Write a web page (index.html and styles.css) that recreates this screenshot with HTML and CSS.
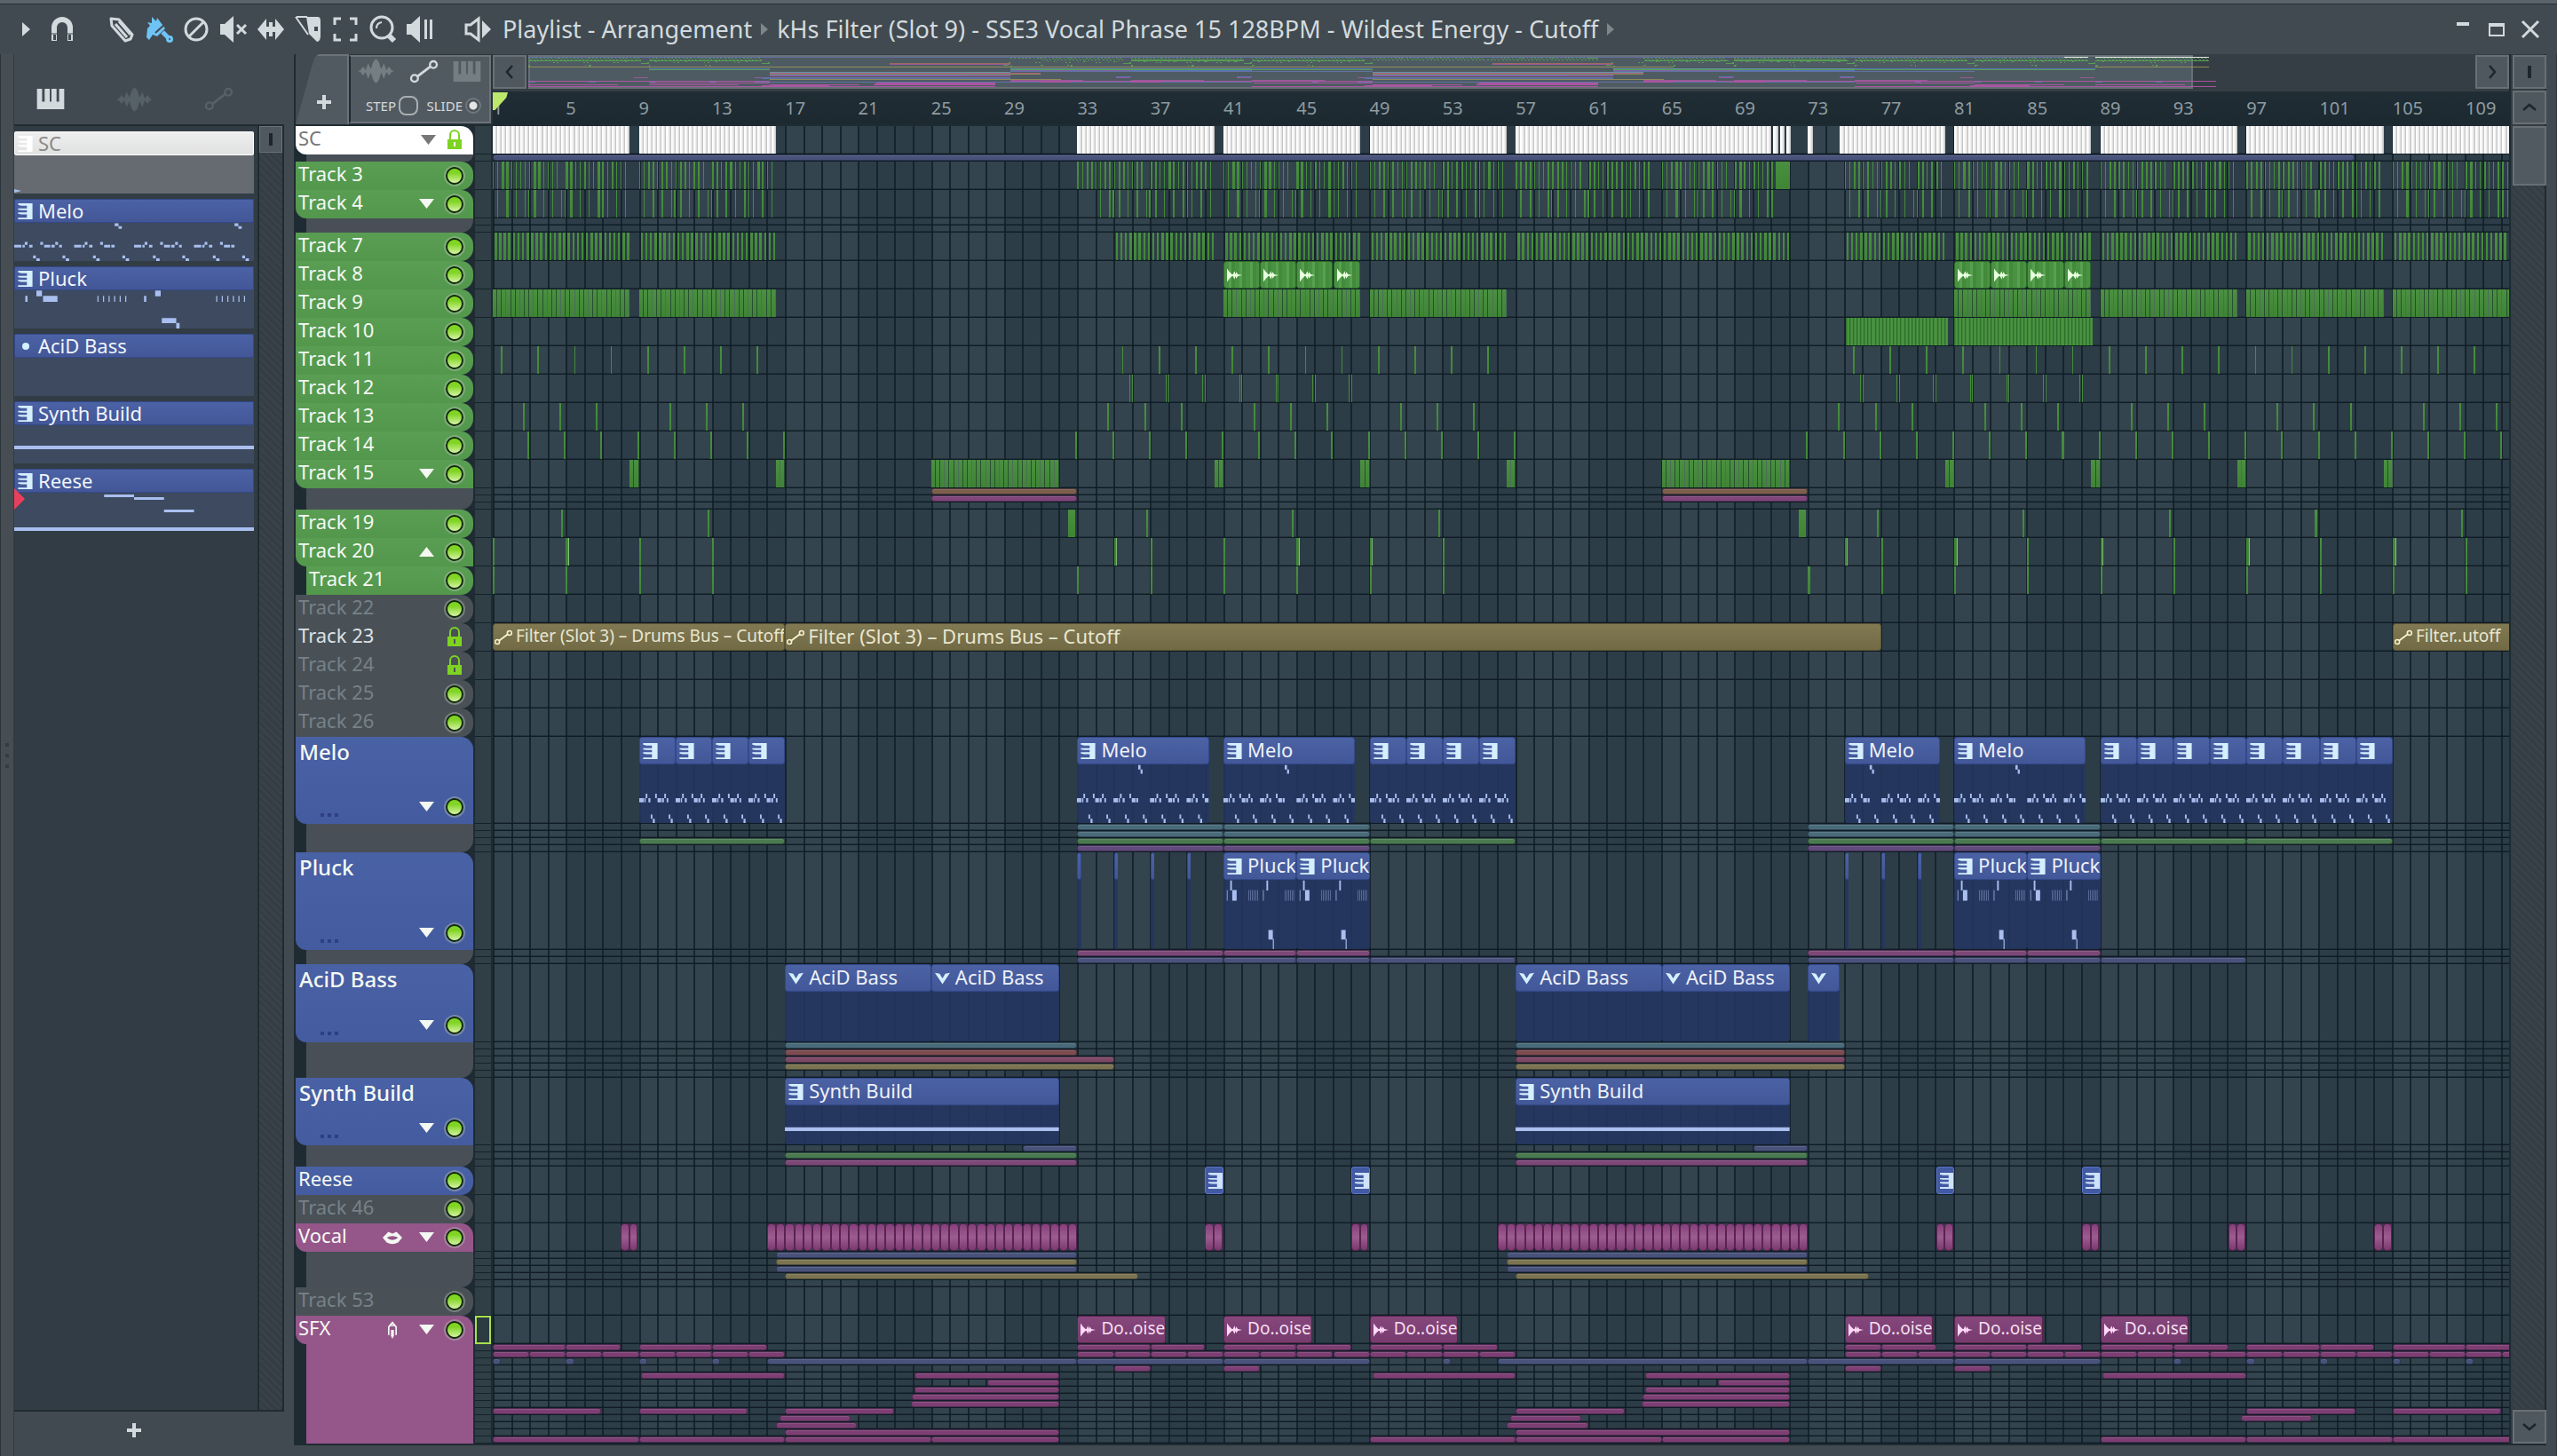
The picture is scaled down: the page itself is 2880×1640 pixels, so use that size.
FILE: index.html
```html
<!DOCTYPE html>
<html lang="en">
<head>
<meta charset="utf-8">
<title>Playlist - Arrangement</title>
<link rel="stylesheet" href="styles.css">
</head>
<body>
<svg class="defs" aria-hidden="true">
  <symbol id="piano" viewBox="0 0 32 24"><path fill="currentColor" d="M0 0h6v15h3V0h6v15h2V0h6v15h3V0h6v24H0z"/></symbol>
  <symbol id="keys" viewBox="0 0 18 20"><path fill="currentColor" d="M0 0h18v20H0v-2h11v-4H4l-4-1v-1.500h11V8.500H4L0 8V6.500h11V3H4L0 2z"/></symbol>
  <symbol id="wave" viewBox="0 0 42 28"><path fill="currentColor" d="M0 14l3-1 3-4 3 4 3-8 3 7 3-9 3-3 3 3 3 9 3-7 3 8 3-4 3 4 3 1-3 1-3 4-3-4-3 8-3-7-3 9-3 3-3-3-3-9-3 7-3-8-3 4-3-4z"/></symbol>
  <symbol id="auto" viewBox="0 0 32 28"><path fill="none" stroke="currentColor" stroke-width="3" d="M8 20L24 8"/><circle cx="5" cy="22" r="4" fill="none" stroke="currentColor" stroke-width="2.500"/><circle cx="27" cy="6" r="4" fill="none" stroke="currentColor" stroke-width="2.500"/></symbol>
  <symbol id="sample" viewBox="0 0 18 18"><path fill="currentColor" d="M0 1l3 4 3 3 1 0 2-4 1 4 1-3 2 3 5 1-5 1-2 3-1-3-1 4-2-4-1 0-3 3-3 4z"/></symbol>
  <symbol id="vee" viewBox="0 0 16 14"><path fill="currentColor" d="M0 1l5 1 3 5 3-5 5-1-8 12z"/></symbol>
  <symbol id="lock" viewBox="0 0 16 22"><path fill="none" stroke="currentColor" stroke-width="2" d="M3 12V6a5 5 0 0 1 10 0v6"/><path fill="currentColor" fill-rule="evenodd" d="M0 11h16v11H0zM7 14v5h2v-5z"/></symbol>
  <symbol id="lips" viewBox="0 0 24 18"><path fill="currentColor" fill-rule="evenodd" d="M0 9l7-7 5 2 5-2 7 7-5 6q-7 4-14 0zM5 9q7 6 14 0-7-4-14 0z"/></symbol>
  <symbol id="jet" viewBox="0 0 14 24"><path fill="none" stroke="currentColor" stroke-width="2" d="M2 19V8l5-6 5 6v11"/><path fill="currentColor" d="M4 5h6v2H4zM5 12h4v8l-2 4-2-4z"/></symbol>
  <symbol id="plus" viewBox="0 0 16 16"><path fill="currentColor" d="M6 0h4v6h6v4h-6v6H6v-6H0V6h6z"/></symbol>
  <symbol id="left" viewBox="0 0 18 18"><path fill="none" stroke="currentColor" stroke-width="2.500" d="M12 2L6 9l6 7"/></symbol>
</svg>

<div class="strip"></div>
<div class="window">
  <header class="titlebar">
    <button class="tool small" aria-label="Menu"><svg viewBox="0 0 10 16"><path fill="currentColor" d="M0 0l9 8-9 8z"/></svg></button>
    <button class="tool magnet" aria-label="Snap"><svg viewBox="0 0 30 30"><path fill="none" stroke="currentColor" stroke-width="6" d="M6 28V13a9 9 0 0 1 18 0v15"/><path stroke="#414a50" stroke-width="1" d="M2 20h8M20 20h8"/><path fill="#414a50" d="M5 21h3v6H5zM22 21h3v6h-3z"/></svg></button>
    <div class="tools">
      <button class="tool" aria-label="Draw"><svg viewBox="0 0 30 30"><path fill="none" stroke="currentColor" stroke-width="3" stroke-linejoin="round" d="M3 3l9 1 15 17-2 5-6 2L4 11zM8 9l13 15M12 6l13 15"/></svg></button>
      <button class="tool active" aria-label="Paint"><svg viewBox="0 0 30 30"><path fill="currentColor" d="M2 7l5 1V1l5 5 1-4 9 12-9 9-5-2-4 6-3-3 1-10 3-3z"/><path stroke="#414a50" stroke-width="2" d="M11 19L22 9"/><path stroke="currentColor" stroke-width="5" d="M19 18l8 8"/><circle cx="27" cy="26" r="4" fill="currentColor"/><circle cx="27" cy="26" r="1" fill="#414a50"/></svg></button>
      <button class="tool" aria-label="Delete"><svg viewBox="0 0 30 30"><circle cx="15" cy="15" r="12" fill="none" stroke="currentColor" stroke-width="3"/><path stroke="currentColor" stroke-width="3" d="M7 23L23 7"/></svg></button>
      <button class="tool" aria-label="Mute"><svg viewBox="0 0 30 30"><path fill="currentColor" d="M0 9h5L15 0v30L5 21H0z"/><path stroke="currentColor" stroke-width="3" d="M19 10l10 10M29 10L19 20"/></svg></button>
      <button class="tool" aria-label="Slip"><svg viewBox="0 0 30 30"><path fill="currentColor" d="M0 15L10 3v9h3V7h4v5h3V3l10 12-10 12v-9h-3v5h-4v-5h-3v9z"/></svg></button>
      <button class="tool" aria-label="Slice"><svg viewBox="0 0 30 30"><path fill="currentColor" fill-rule="evenodd" d="M13 1h13q3 0 3 5v16q0 7-4 7L16 20zM22 12v5h4v-5z"/><path stroke="currentColor" stroke-width="2" d="M1 1l14 20M2 1h12"/></svg></button>
      <button class="tool" aria-label="Select"><svg viewBox="0 0 30 30"><path fill="none" stroke="currentColor" stroke-width="3" d="M3 10V3h7M20 3h7v7M27 20v7h-7M10 27H3v-7"/></svg></button>
      <button class="tool" aria-label="Zoom"><svg viewBox="0 0 30 30"><circle cx="14" cy="13" r="12" fill="none" stroke="currentColor" stroke-width="3"/><path stroke="currentColor" stroke-width="6" d="M22 22l6 6"/><path fill="none" stroke="currentColor" stroke-width="2" d="M8 14q0-6 6-7"/></svg></button>
      <button class="tool" aria-label="Playback"><svg viewBox="0 0 30 30"><path fill="currentColor" d="M0 9h5L15 0v30L5 21H0zM20 4h3v22h-3zM26 4h3v22h-3z"/></svg></button>
    </div>
    <button class="tool speaker" aria-label="Preview"><svg viewBox="0 0 30 30"><path fill="none" stroke="currentColor" stroke-width="3" d="M7 10H2v10h5l9 7V3z"/><path fill="currentColor" d="M20 5l10 10-10 10z"/></svg></button>
    <nav class="crumbs"><a href="#">Playlist - Arrangement</a><i></i><a href="#">kHs Filter (Slot 9) - SSE3 Vocal Phrase 15 128BPM - Wildest Energy - Cutoff</a><i></i></nav>
    <div class="winbtns">
      <button class="tool" aria-label="Minimize"><svg viewBox="0 0 20 20"><path fill="currentColor" d="M3 2h14v4H3z"/></svg></button>
      <button class="tool" aria-label="Maximize"><svg viewBox="0 0 20 20"><path fill="currentColor" fill-rule="evenodd" d="M1 3h18v15H1zM3 7v9h14V7z"/></svg></button>
      <button class="tool" aria-label="Close"><svg viewBox="0 0 20 20"><path stroke="currentColor" stroke-width="3" d="M1 1l18 18M19 1L1 19"/></svg></button>
    </div>
  </header>

  <div class="main">
    <div class="edge-left"><i></i><i></i><i></i></div>
    <aside class="picker">
      <div class="picker-tabs">
        <button aria-label="Patterns"><svg class="i-piano on"><use href="#piano"/></svg></button>
        <button aria-label="Audio"><svg class="i-wave"><use href="#wave"/></svg></button>
        <button aria-label="Automation"><svg class="i-auto"><use href="#auto"/></svg></button>
      </div>
      <div class="picker-body">
        <ul class="patterns" id="patterns"></ul>
        <div class="scroll narrow"><button class="grip" aria-label="Scroll"><i></i></button><div class="hatch"></div></div>
      </div>
      <button class="add" aria-label="Add pattern"><svg><use href="#plus"/></svg></button>
    </aside>

    <section class="playlist">
      <div class="head">
        <button class="tab-add" aria-label="Add track"><svg><use href="#plus"/></svg></button>
        <div class="modes">
          <div class="mode-icons">
            <svg class="i-wave dim"><use href="#wave"/></svg>
            <svg class="i-auto on"><use href="#auto"/></svg>
            <svg class="i-piano dim"><use href="#piano"/></svg>
          </div>
          <div class="mode-opts">
            <label>STEP<input type="checkbox" class="step"></label>
            <label>SLIDE<input type="radio" class="slide" checked></label>
          </div>
        </div>
        <div class="timeline">
          <div class="overview-row">
            <button class="sq" aria-label="Scroll left"><svg><use href="#left"/></svg></button>
            <div class="overview" id="overview"></div>
            <button class="sq" aria-label="Scroll right"><svg class="flip"><use href="#left"/></svg></button>
          </div>
          <div class="ruler" id="ruler"></div>
        </div>
      </div>
      <div class="tracks" id="tracks"><div class="barlines" id="barlines"></div></div>
    </section>

    <div class="vscroll">
      <button class="sq" aria-label="Zoom"><i></i></button>
      <button class="sq" aria-label="Scroll up"><svg class="up"><use href="#left"/></svg></button>
      <button class="thumb" aria-label="Scroll thumb"></button>
      <div class="hatch"></div>
      <button class="sq" aria-label="Scroll down"><svg class="down"><use href="#left"/></svg></button>
    </div>
    <div class="edge-right"></div>
  </div>
</div>
<script src="script.js"></script>
</body>
</html>
```
FILE: styles.css
```css
:root {
  --panel: #414a50;
  --line: #1f2b32;
  --icon: #d3dade;
}
* { box-sizing: border-box; }
body {
  margin: 0;
  min-height: 100vh;
  display: flex;
  flex-direction: column;
  background: var(--panel);
  color: var(--icon);
  font-family: "Noto Sans", "Open Sans", sans-serif;
  font-size: 22px;
  line-height: 28px;
}
button { padding: 0; border: 0; background: none; color: inherit; font: inherit; display: grid; place-items: center; }
svg { display: block; overflow: visible; }
.defs { position: absolute; width: 0; height: 0; }
.strip { height: 5px; background: #5a626a; border-bottom: 1px solid #262e35; }
.window { flex: 1; display: flex; flex-direction: column; border-bottom: 2px solid #2c353b; }

.titlebar { height: 56px; display: flex; align-items: center; padding: 0 20px 0 25px; }
.tool { width: 30px; height: 30px; }
.tool svg { width: 100%; height: 100%; }
.tool.small { width: 10px; height: 16px; }
.tool.magnet { margin-left: 20px; }
.tools { display: flex; gap: 12px; margin-left: 37px; }
.active { color: #6fc4f6; }
.speaker { margin: 0 13px 0 35px; }
.crumbs { display: flex; align-items: center; font-size: 27px; white-space: nowrap; flex: 1; }
.crumbs a { color: inherit; text-decoration: none; }
.crumbs i { margin: 0 10px; border: 7px solid transparent; border-left: 8px solid #7d868b; border-right: 0; }
.winbtns { display: flex; gap: 18px; }
.winbtns .tool { width: 20px; height: 20px; }

.main { flex: 1; display: grid; grid-template-columns: 16px 304px 11px minmax(0, 1fr) 42px 12px; grid-template-rows: auto; }
.edge-left { border-left: 1px solid #2b343a; border-right: 1px solid #333c42; background: #464d53; display: flex; flex-direction: column; justify-content: center; align-items: center; gap: 8px; }
.edge-left i { width: 4px; height: 4px; background: #343c42; }
.edge-right { border-right: 1px solid #2b343a; grid-column: 6; }

.picker { display: flex; flex-direction: column; }
.picker-tabs { height: 79px; display: flex; align-items: center; padding: 22px 0 0 25px; gap: 58px; color: #566067; }
.picker-tabs button { height: 28px; }
.i-piano { width: 32px; height: 23px; }
.i-wave { width: 41px; height: 28px; }
.i-auto { width: 33px; height: 27px; }
.on { color: var(--icon); }
.dim { color: #757e83; }
.picker-body { flex: 1; display: flex; border-top: 2px solid var(--line); border-bottom: 2px solid var(--line); background: #323c44; }
.patterns { flex: 1; list-style: none; margin: 0; padding: 6px 4px 0 0; display: flex; flex-direction: column; gap: 6px; }
.pattern { position: relative; height: 70px; background: #3d4a5f; display: flex; flex-direction: column; }
.pattern-head { height: 27px; background: linear-gradient(#4b62a4, #435798); border: 1px solid #33498a; border-radius: 2px; display: flex; align-items: center; gap: 6px; padding-left: 3px; color: #f0f4fa; }
.pattern-head span { padding-bottom: 2px; }
.pattern-head svg { width: 17px; height: 18px; color: #d6efff; }
.pattern-head .dot { width: 8px; height: 8px; margin: 0 4px 0 5px; border-radius: 50%; background: #d6efff; }
.pattern.blank { background: #656b71; }
.blank .pattern-head { background: linear-gradient(#eee, #e0e1e1); border-color: #fff; color: #8a8a8a; }
.blank .pattern-head svg { color: #fff; }
.pattern .notes { width: 100%; height: 43px; }
.marker { position: absolute; left: 0; top: 22px; border: 12px solid transparent; border-left-color: #e8405c; border-right: 0; }
.notes { fill: #a9bff0; }
.scroll.narrow { width: 30px; border-left: 2px solid var(--line); border-right: 2px solid var(--line); display: flex; flex-direction: column; }
.grip { height: 30px; background: #50585f; border: 1px solid #6a7278; }
.grip i, .sq i { width: 4px; height: 14px; background: #1c262c; }
.hatch { flex: 1; background: repeating-linear-gradient(45deg, #343d44 0 3px, #3a4249 3px 6px); }
.add { height: 50px; margin-right: 34px; padding-bottom: 8px; }
.add svg, .tab-add svg { width: 16px; height: 16px; }

.playlist { grid-column: 4; display: flex; flex-direction: column; min-width: 0; margin-bottom: 12px; border-left: 2px solid var(--line); border-bottom: 2px solid var(--line); }
.head { height: 81px; display: flex; border-bottom: 2px solid var(--line); background: linear-gradient(90deg, #414a50 30px, #2a343b 30px); }
.tab-add { width: 60px; background: #525a61; clip-path: polygon(0 100%, 30% 18%, 36% 4%, 44% 0, 100% 0, 100% 100%); border-top: 2px solid #6b7379; border-right: 2px solid #6b7379; padding: 26px 0 0 6px; }
.modes { width: 160px; margin: 1px 2px 1px 0; background: #525a61; border: 2px solid #6b7379; border-left: 2px solid #20292f; display: flex; flex-direction: column; justify-content: space-between; padding: 2px 9px 6px 8px; }
.mode-icons { display: flex; justify-content: space-between; align-items: center; }
.mode-opts { display: flex; justify-content: space-between; padding-left: 9px; font-size: 15px; line-height: 24px; }
.mode-opts label { display: flex; align-items: center; gap: 3px; }
.mode-opts input { appearance: none; margin: 0; }
.step { width: 22px; height: 22px; border: 2px solid #a8afb3; border-radius: 8px; }
.slide { width: 18px; height: 18px; border: 2px solid #6f777c; border-radius: 50%; background: radial-gradient(circle, #e2e6e8 4px, #4b5359 5px); }
.timeline { flex: 1; min-width: 0; display: flex; flex-direction: column; }
.overview-row { height: 42px; display: flex; background: #363e45; }
.sq { width: 38px; height: 38px; margin-top: 1px; background: #50585f; border: 2px solid #687076; color: #1c262c; flex: none; }
.sq svg { width: 18px; height: 18px; }
.sq .flip { transform: rotate(180deg); }
.sq .up { transform: rotate(90deg); }
.sq .down { transform: rotate(270deg); }
.overview { flex: 1; position: relative; margin: 1px 0 3px 2px; }
.overview svg { width: 100%; height: 38px; position: relative; overflow: hidden; opacity: .85; }
.view { position: absolute; inset: 0 auto 0 0; width: 85.5%; background: #4e5b62; border: 2px solid #687076; }
.ruler { flex: 1; display: flex; align-items: center; overflow: hidden; background: linear-gradient(#202d35, #1c2930); color: #8f9ba1; font-size: 20px; line-height: 24px; position: relative; }
.ruler span { flex: none; }
.ruler::before { content: ""; position: absolute; left: 0; top: 1px; width: 17px; height: 20px; background: #bce86c; clip-path: polygon(0 0, 100% 0, 90% 30%, 15% 100%, 0 100%); }

.tracks { position: relative; background: #1f2b33; }
.barlines { position: absolute; inset: 0 0 0 222px; display: flex; overflow: hidden; }
.barlines i { flex: none; background: #34444e; border-left: 2px solid #15242d; }
.barlines i.dark { background: #2d3d47; }
.group { position: relative; display: flex; }
.names { width: 200px; flex: none; display: flex; flex-direction: column; }
.name { position: relative; display: flex; justify-content: space-between; border-radius: 0 14px 14px 0; padding: 0 11px 0 3px; color: #f4f8f2; }
.name.open { border-radius: 0 14px 0 12px; }
.name.child { margin-left: 12px; }
.name .label { line-height: 27px; }
.name .ctl { display: flex; align-items: flex-end; gap: 13px; padding-bottom: 6px; }
.name .ctl .caret { margin-bottom: 5px; }
.name.tall { padding-left: 4px; }
.name.tall .label { font-size: 24px; font-weight: 500; line-height: 33px; }
.name.tall .ctl { padding-bottom: 9px; }
.dots { position: absolute; left: 28px; bottom: 8px; width: 20px; height: 4px; background: repeating-linear-gradient(90deg, #2c4082 0 4px, transparent 4px 8px); }
.green { background: linear-gradient(#599e53, #52974b); }
.blue { background: linear-gradient(#4961a5, #445b9f); }
.pink { background: #95568a; }
.grey { background: #495157; color: #dde1e3; }
.grey.off { color: #788187; }
.name.white { background: #fff; color: #777; }
.led { appearance: none; margin: 0; width: 20px; height: 20px; border-radius: 50%; border: 2px solid #10290a; outline: 2px solid rgba(190, 200, 185, .4); background: linear-gradient(#80d423 30%, #d6f3a4); }
.caret { width: 17px; height: 11px; background: currentColor; clip-path: polygon(0 0, 100% 0, 50% 100%); }
.caret.rev { clip-path: polygon(0 100%, 50% 0, 100% 100%); }
.lockbtn { color: #7ed321; margin-right: 2px; }
.lockbtn svg { width: 16px; height: 22px; }
.glyph { width: 22px; height: 20px; margin-right: 6px; }
.subbox { margin-left: 12px; border-radius: 0 0 14px 0; background: #484f56; }
.subbox.pink { border-radius: 0; background: #95568a; }
.gutter { width: 18px; margin: 0 2px; flex: none; }
.gutter i { display: block; background: #303e46; border-bottom: 1px solid #14222b; }
.gutter i.sel { background: #2c3a42; border: 2px solid #a8e04a; }
.lanes { flex: 1; min-width: 0; overflow: hidden; }
.lane { position: relative; border-bottom: 1px solid #0f1c25; box-shadow: inset 0 -1px rgba(15, 28, 37, .45); }
.lane > * { position: absolute; top: 0; bottom: 0; }
.hit { background: linear-gradient(#4a8f41, #3f8535); }
.hit.bright { background: linear-gradient(90deg, #3f8535 60%, #a5d59a); }
.q9 { background: linear-gradient(#4b9042, #3f8436); border-right: 1px solid #27502f; }
.q9:nth-child(3n) { border-right-color: #4b6e58; }
.q10 { background: linear-gradient(90deg, #2f702b 1px, #4f9947 2px, #438a3a); }
.qw { background: linear-gradient(90deg, #fff 20%, #ececec 60%, #b9b9b9); }
.clip { overflow: hidden; border-radius: 3px; white-space: nowrap; display: flex; flex-direction: column; }
.clip-head { flex: none; height: 31px; display: flex; align-items: center; gap: 6px; padding-left: 3px; border: 1px solid #33498a; border-radius: 3px; background: linear-gradient(#4b62a4, #425798); color: #eef1f8; line-height: 24px; overflow: hidden; }
.clip-head span { padding-bottom: 3px; }
.clip-head svg { width: 17px; height: 18px; color: #d6efff; flex: none; }
.clip.midi { background: rgba(36, 54, 98, .86); }
.clip.midi .notes { flex: 1; width: 100%; min-height: 0; }
.clip.sample .clip-head, .clip.auto .clip-head { flex: 1; }
.clip.sample .clip-head { border-color: #2b6a27; background: repeating-linear-gradient(90deg, #4a9243 0 5px, #57a04f 5px 8px, #438a3b 8px 12px); }
.clip.sample svg { color: #e6ffdc; }
.clip.noise .clip-head { flex: 1; border-color: #5b2250; background: linear-gradient(#85477c, #773b6e); color: #f5dff0; font-size: 19px; }
.clip.noise svg { color: #ffd8f8; }
.clip.auto .clip-head { border-color: #5a5434; background: linear-gradient(#807952, #716a45); color: #e9e6d0; padding-left: 1px; gap: 4px; }
.clip.auto svg { width: 20px; color: #f6f4cf; }
.clip.tight .clip-head { font-size: 19px; }
.clip.mini { background: #4259a3; border: 1px solid #5c76c4; padding: 5px 0 0 3px; }
.clip.mini svg { width: 16px; height: 20px; color: #cfe2fa; }
.vox { border-radius: 4px; border: 1px solid #5b2250; background: linear-gradient(#84407a, #9c5c90 50%, #7a3a70); }
.bar { border-radius: 3px; border: 1px solid rgba(10, 15, 30, .4); box-shadow: inset 0 1px rgba(255, 255, 255, .12); }
.b-slate { background: #49527a; }
.b-brown { background: #7d5d4c; }
.b-purple { background: #80457b; }
.b-teal { background: #496a79; }
.b-green { background: #4a7a4f; }
.b-violet { background: #634a7c; }
.b-rose { background: #7d4878; }
.b-red { background: #7c4c50; }
.b-wine { background: #7d4866; }
.b-olive { background: #7b7450; }
.b-mag { background: #7d3f73; }

.vscroll { padding-left: 2px; border-left: 2px solid var(--line); border-right: 2px solid var(--line); display: flex; flex-direction: column; margin-bottom: 12px; border-bottom: 2px solid var(--line); background: #343d44; grid-column: 5; }
.vscroll .sq + .sq { margin-top: 2px; }
.thumb { width: 38px; height: 67px; margin-top: 2px; background: #525a61; border: 2px solid #687076; }
```
FILE: script.js
```js
// Bars visible in the lane area and in the overview strip.
const SPAN = 110.37, MAP = 129.2;
const pct = n => (n / SPAN * 100).toFixed(4) + '%';
const place = (s, e) => `left:${pct(s - 1)};width:${pct(e - s)}`;
const icon = id => `<svg><use href="#${id}"/></svg>`;
const range = (from, to, step) => { const r = []; for (let v = from; v <= to + 0.001; v += step) r.push(v); return r; };
const shown = (list, to) => list.filter(v => v < to);

// Note shapes. One bar is 54 units wide.
function rects(list) { return list.map(([x, y, w, h]) => `M${x} ${y}h${w}v${h}h${-w}z`).join(''); }
function melo(offset, len) {
  const out = [];
  for (let c = 0; c * 2 < offset + len; c++) {
    const x = (c * 2 - offset) * 54, turn = c % 2 === 1 && len > 2;
    out.push([x, 113, 13, 14], [x + 15, 113, 4, 14], [x + 19, 98, 5, 15], [x + 27, 113, 6, 14], [x + 47, 98, 5, 15], [x + 54, 113, 11, 14], [x + 67, 113, 6, 14]);
    if (turn) out.push([x + 73, 2, 7, 15], [x + 80, 17, 6, 14]);
    else out.push([x + 74, 98, 5, 15], [x + 81, 113, 5, 14]);
    out.push([x + 34, 168, 5, 14], [x + 40, 182, 6, 14], [x + 87, 168, 5, 14], [x + 93, 182, 6, 14]);
  }
  return notes(len * 54, 196, rects(out.filter(r => r[0] >= 0)));
}
function pluck(len) {
  const out = [[10, 34, 2, 36], [20, 2, 5, 34], [26, 34, 13, 36], [117, 34, 2, 36], [127, 2, 5, 34], [133, 168, 13, 32], [146, 198, 3, 34]];
  for (let i = 0; i < 6; i++) out.push([75 + i * 5, 34, 1, 36], [182 + i * 5, 34, 1, 36]);
  return notes(len * 54, 232, rects(out));
}
function notes(w, h, d) { return `<svg class="notes" viewBox="0 0 ${w} ${h}" preserveAspectRatio="none"><path d="${d}"/></svg>`; }

// ---- Pattern picker
const line = notes(100, 43, rects([[0, 23, 100, 4]]));
const reese = notes(100, 43, rects([[37.5, 2, 12.5, 3], [50, 5, 12.5, 3], [62.5, 19, 12.5, 3], [0, 39, 100, 4]]));
document.getElementById('patterns').innerHTML = [
  ['SC', notes(100, 43, 'M0 38l3 2-3 2z'), 'blank'], ['Melo', melo(0, 8)], ['Pluck', pluck(4)], ['AciD Bass', '', 'plain'], ['Synth Build', line], ['Reese', reese]
].map(([n, body, cls = '']) => `<li class="pattern ${cls}"><div class="pattern-head">${cls === 'plain' ? '<i class="dot"></i>' : icon('keys')}<span>${n}</span></div>${body}${n === 'Reese' ? '<i class="marker"></i>' : ''}</li>`).join('');

// ---- Clip builders: each returns {s, e, html}
const el = (s, e, cls, inner = '') => ({ s, e, cls, html: `<i class="${cls}" style="${place(s, e)}">${inner}</i>` });
const bars = (c, ...pairs) => pairs.map(([s, e]) => el(s, e, 'bar b-' + c));
const hits = (list, w = 0.1, cls = 'hit') => shown(list, 111.4).map(s => el(s, s + w, cls));
const cells = (s, e, w, cls) => range(s, e - w, w).map(v => el(v, v + w, cls));
const clip = (s, e, kind, ic, label, body = '') => ({ s, e, cls: kind, html: `<div class="clip ${kind}" style="${place(s, e)}"><div class="clip-head">${icon(ic)}${label ? `<span>${label}</span>` : ''}</div>${body}</div>` });
const steps = (list, w) => list.map(s => [s, s + w]);

const main = [[1, 8.5], [9, 16.5], [33, 40.5], [41, 48.5], [49, 56.5], [57, 64.5], [65, 71.25], [75, 80.5], [81, 88.5], [89, 96.5], [97, 104.5], [105, 112.5]];
const white = [[1, 8.5], [9, 16.5], [33, 40.5], [41, 48.5], [49, 56.5], [57, 71], [71.1, 71.35], [71.45, 71.7], [71.8, 72.05], [73, 73.25], [74.75, 80.5], [81, 88.5], [89, 96.5], [97, 104.5], [105, 112.5]];
const wide = [2, 3, 9, 10, 16, 17, 20, 23, 26];
const t3 = main.flatMap(([s, e]) => range(0, 29, 1).filter(q => q !== 15 && s + q / 4 < e).map(q => el(s + q / 4, s + q / 4 + (wide.includes(q) ? 0.11 : 0.06), 'hit')));
const t4q = [1, 3, 5, 7, 7.75, 9, 11, 13, 15, 15.75, 17, 19, 21, 23, 24, 25, 27, 29];
const t4 = main.flatMap(([s, e]) => t4q.filter(q => !(s === 33 && q < 5) && s + q / 4 < e).map(q => el(s + q / 4, s + q / 4 + ([3, 9, 17, 23].includes(q) ? 0.11 : 0.06), 'hit')));
const t7 = [[1, 8.5], [9, 16.5], [35, 40.5], [41, 48.5], [49, 56.5], [57, 72], [75, 80.5], [81, 88.5], [89, 96.5], [97, 104.5], [105, 112.5]]
  .flatMap(([s, e]) => range(s + 0.1, e - 0.1, 0.25).map(v => el(v, v + 0.12, 'hit')));
const t9 = [[1, 8.5], [9, 16.5], [41, 48.5], [49, 56.5], [81, 88.5], [89, 96.5], [97, 104.5], [105, 112.5]].flatMap(([s, e]) => cells(s, e, 0.25, 'q9'));
const even = (a, b, off, skip) => range(a, b, 2).filter(v => !skip || v % 8 !== 0).map(v => v + off);
const fill = [8.5, 16.5, 40.5, 48.5, 56.5, 80.5, 88.5, 96.5, 104.5].flatMap(s => cells(s, s + 0.5, 0.25, 'q9'));

const M = (s, e, off = 0) => clip(s, e, 'midi', 'keys', e - s > 2 ? 'Melo' : '', melo(off, e - s));
const P = s => clip(s, s + 4, 'midi', 'keys', 'Pluck', pluck(4));
const thin = s => ({ s, e: s + 0.2, cls: 'midi', html: `<div class="clip midi" style="${place(s, s + 0.2)}"><div class="clip-head"></div></div>` });
const A = (s, e) => clip(s, e, 'midi', 'vee', e - s > 2 ? 'AciD Bass' : '');
const S = s => clip(s, s + 15, 'midi', 'keys', 'Synth Build', notes(100, 64, rects([[0, 36, 100, 6]])));
const R = s => ({ s, e: s + 1, cls: 'midi', html: `<div class="clip mini" style="${place(s, s + 1)}">${icon('keys')}</div>` });
const vox = [...[8, 40, 48, 80, 88, 96, 104].flatMap(s => cells(s, s + 0.94, 0.47, 'vox')), ...cells(16, 33, 0.5, 'vox'), ...cells(56, 73, 0.5, 'vox')];
const noise = s => clip(s, s + 4.85, 'noise', 'sample', 'Do..oise');
const pair = (s, m, e) => [[s, m], [m, e]];
const late = [77, 81, 85, 89, 93, 97, 101, 105, 109];

const T = (name, color, clips = [], more = {}) => ({ name, color, h: 32, clips, subs: [], ...more });
const tracks = [
  T('SC', 'white', white.flatMap(([s, e]) => cells(s, e, 0.25, 'qw')), { lock: 1, caret: 1, subs: [bars('slate', [1, 102.9])] }),
  T('Track 3', 'green', [...t3, el(71.25, 72, 'hit')]),
  T('Track 4', 'green', t4, { caret: 1, subs: [[], []] }),
  T('Track 7', 'green', t7),
  T('Track 8', 'green', [41, 43, 45, 47, 81, 83, 85, 87].map(s => clip(s, s % 8 === 7 ? s + 1.5 : s + 2, 'sample', 'sample', ''))),
  T('Track 9', 'green', t9),
  T('Track 10', 'green', [...cells(75.05, 80.65, 0.2, 'q10'), ...cells(81, 88.6, 0.2, 'q10')]),
  T('Track 11', 'green', hits([...even(1, 15, 0.45), ...even(35, 55, 0.45), ...even(75, 109, 0.45)], 0.08)),
  T('Track 12', 'green', hits([...even(35, 47, 0.85), ...even(35, 47, 0.98), ...even(75, 87, 0.85), ...even(75, 87, 0.98)], 0.05)),
  T('Track 13', 'green', hits([...even(2, 14, 0.65, 1), ...even(34, 54, 0.65, 1), ...even(74, 110, 0.65, 1)])),
  T('Track 14', 'green', hits([...even(2, 16, 0.9), ...even(32, 56, 0.9), ...even(72, 110, 0.9)])),
  T('Track 15', 'green', [...fill, ...cells(25, 32, 0.25, 'q9'), ...cells(65, 72, 0.25, 'q9')], { caret: 1, subs: [bars('brown', [25, 33], [65, 73]), bars('purple', [25, 33], [65, 73]), []] }),
  T('Track 19', 'green', [...hits([4.75, 12.75, 36.75, 44.75, 52.75, 76.75, 84.75, 92.75, 100.75, 108.75]), ...hits([32.5, 72.5], 0.4)]),
  T('Track 20', 'green', [...hits([1, 9, 13, 37, 41, 53, ...late.filter(v => v % 8 === 5)]), ...hits([5, 35, 45, 49, 75, ...late.filter(v => v % 8 === 1)], 0.18, 'hit bright')], { caret: 2 }),
  T('Track 21', 'green', hits([1, 5, 9, 13, 33, 37, 41, 45, 49, 53, 73, ...late]), { child: 1 }),
  T('Track 22', 'grey off'),
  T('Track 23', 'grey', [clip(1, 17, 'auto tight', 'auto', 'Filter (Slot 3) – Drums Bus – Cutoff'), clip(17, 77, 'auto', 'auto', 'Filter (Slot 3) – Drums Bus – Cutoff'), clip(105, 112.5, 'auto tight', 'auto', 'Filter..utoff')], { lock: 1 }),
  T('Track 24', 'grey off', [], { lock: 1 }),
  T('Track 25', 'grey off'),
  T('Track 26', 'grey off'),
  T('Melo', 'blue', [...[9, 11, 13, 15, 49, 51, 53, 55, 89, 91, 93, 95, 97, 99, 101, 103].map(s => M(s, s + 2)), M(33, 40.2), M(41, 48.2), M(75, 80.2, 2), M(81, 88.2)], {
    h: 98, caret: 1, subs: [
      bars('teal', [33, 41], [41, 49], [73, 81], [81, 89]),
      bars('teal', [33, 41], [41, 49], [73, 81], [81, 89]),
      bars('green', [9, 17], [33, 41], [41, 49], [49, 57], [73, 81], [81, 89], [89, 97], [97, 105]),
      bars('violet', [33, 41], [41, 49], [73, 81], [81, 89])]
  }),
  T('Pluck', 'blue', [...[33, 35, 37, 39, 75, 77, 79].map(thin), ...[41, 45, 81, 85].map(P)], {
    h: 110, caret: 1, subs: [
      bars('rose', [33, 41], [41, 45], [45, 49], [73, 81], [81, 85], [85, 89]),
      bars('slate', [33, 41], [41, 45], [45, 49], [49, 57], [73, 81], [81, 85], [85, 89], [89, 97])]
  }),
  T('AciD Bass', 'blue', [A(17, 25), A(25, 32), A(57, 65), A(65, 72), A(73, 74.73)], {
    h: 88, caret: 1, subs: [bars('teal', [17, 33], [57, 75]), bars('red', [17, 33], [57, 75]), bars('wine', [17, 35], [57, 75]), bars('olive', [17, 35], [57, 75]), []]
  }),
  T('Synth Build', 'blue', [S(17), S(57)], { h: 76, caret: 1, subs: [bars('slate', [30, 33], [70, 73]), bars('green', [17, 33], [57, 73]), bars('rose', [17, 33], [57, 73])] }),
  T('Reese', 'blue', [40, 48, 80, 88].map(R)),
  T('Track 46', 'grey off'),
  T('Vocal', 'pink', vox, { glyph: 'lips', caret: 1, subs: [bars('slate', [16.5, 33], [56.5, 73]), bars('olive', [16.5, 33], [56.5, 73]), bars('slate', [16.5, 33], [56.5, 73]), bars('olive', [17, 36.35], [57, 76.35]), []] }),
  T('Track 53', 'grey off'),
  T('SFX', 'pink', [33, 41, 49, 75, 81, 89].map(noise), {
    glyph: 'jet', caret: 1, sel: 1, subs: [
      bars('mag', ...[1, 9, 33, 41, 49, 81, 89, 97, 105].flatMap(s => pair(s, s + 4, s + 7)), ...pair(75, 77, 80)),
      bars('mag', ...steps([...range(1, 15, 2), ...range(33, 55, 2), ...range(75, 111, 2)], 2)),
      bars('slate', ...steps([1, 5, 9, 13, 53, 93, 97, 101, 105, 109], 0.45), [16, 33], [33, 41], [41, 49], [56, 73], [73, 81], [81, 89]),
      bars('mag', [35, 37], [41, 43], [75, 77], [81, 83]),
      bars('mag', [9.1, 17], [24.1, 32], [49.15, 57], [64.1, 72], [89.1, 97]),
      bars('mag', [28.05, 32], [68.05, 72]),
      bars('mag', [24.1, 32], [64.1, 72]),
      bars('mag', [23.95, 32], [63.95, 72]),
      bars('mag', [23.9, 32], [63.9, 72]),
      bars('mag', ...steps([1, 9, 17, 57, 97, 105], 5.95)),
      bars('mag', [16.7, 20.6], [56.7, 60.6], [96.7, 100.6]),
      bars('mag', [16.5, 20.95], [56.5, 60.95]),
      bars('mag', [17, 32], [57, 72]),
      bars('mag', [1, 9], [9, 17], [17, 25], [25, 32], [49, 57], [57, 65], [65, 72], [89, 97], [97, 105], [105, 113])]
  })
];

// ---- Track list
const lane = (list, h) => `<div class="lane" style="height:${h}px">${list.map(c => c.html).join('')}</div>`;
document.getElementById('tracks').insertAdjacentHTML('beforeend', tracks.map(t => {
  const open = t.subs.length || t.caret;
  const cls = ['name', t.color, open ? 'open' : '', t.h > 32 ? 'tall' : '', t.child ? 'child' : ''].join(' ');
  const ctl = (t.glyph ? `<svg class="glyph"><use href="#${t.glyph}"/></svg>` : '')
    + (t.caret ? `<button class="caret ${t.caret === 2 ? 'rev' : ''}" aria-label="Toggle group ${t.name}"></button>` : '')
    + (t.lock ? `<button class="lockbtn" aria-label="Lock ${t.name}">${icon('lock')}</button>` : `<input type="checkbox" class="led" checked aria-label="Enable ${t.name}">`);
  return `<div class="group"><div class="names"><div class="${cls}" style="height:${t.h}px"><span class="label">${t.name}</span>${t.h > 32 ? '<i class="dots"></i>' : ''}<div class="ctl">${ctl}</div></div>`
    + (t.subs.length ? `<div class="subbox ${t.name === 'SFX' ? 'pink' : ''}" style="height:${t.subs.length * 8}px"></div>` : '') + '</div>'
    + `<div class="gutter"><i class="${t.sel ? 'sel' : ''}" style="height:${t.h}px"></i>${t.subs.map(() => '<i style="height:8px"></i>').join('')}</div>`
    + `<div class="lanes">${lane(t.clips, t.h)}${t.subs.map(s => lane(s, 8)).join('')}</div></div>`;
}).join(''));

// ---- Bar lines and ruler
document.getElementById('barlines').innerHTML = range(0, 110, 1).map(b => `<i class="${b % 8 > 3 ? 'dark' : ''}" style="width:${pct(1)}"></i>`).join('');
document.getElementById('ruler').innerHTML = range(1, 109, 4).map(b => `<span style="width:${pct(4)}">${b}</span>`).join('');

// ---- Overview strip, one row per track
const tint = { white: '#fff', green: '#58a850', grey: '#a09558', 'grey off': '#a09558', blue: '#5a78c8', pink: '#a65a9c', slate: '#6674b0', brown: '#a8705c', purple: '#a85aa0', teal: '#6a9fb4', violet: '#8a64b0', rose: '#b45a9c', red: '#b46a6c', wine: '#b46088', olive: '#9c9258', mag: '#bb56ae' };
let row = 0, map = '';
const draw = (list, color, h) => {
  for (const c of list) {
    const key = color || c.cls.split('b-')[1];
    map += `<rect x="${(c.s - 1).toFixed(2)}" y="${3 + row}" width="${Math.max(0.1, c.e - c.s).toFixed(2)}" height="${h}" fill="${tint[key]}"/>`;
  }
  row++;
};
for (const t of tracks) { draw(t.clips, t.color, t.h > 32 ? 4 : 2); t.subs.forEach(s => draw(s, '', 2)); }
document.getElementById('overview').innerHTML = `<div class="view"></div><svg viewBox="0 0 ${MAP} 76" preserveAspectRatio="none" shape-rendering="crispEdges">${map}</svg>`;
```
